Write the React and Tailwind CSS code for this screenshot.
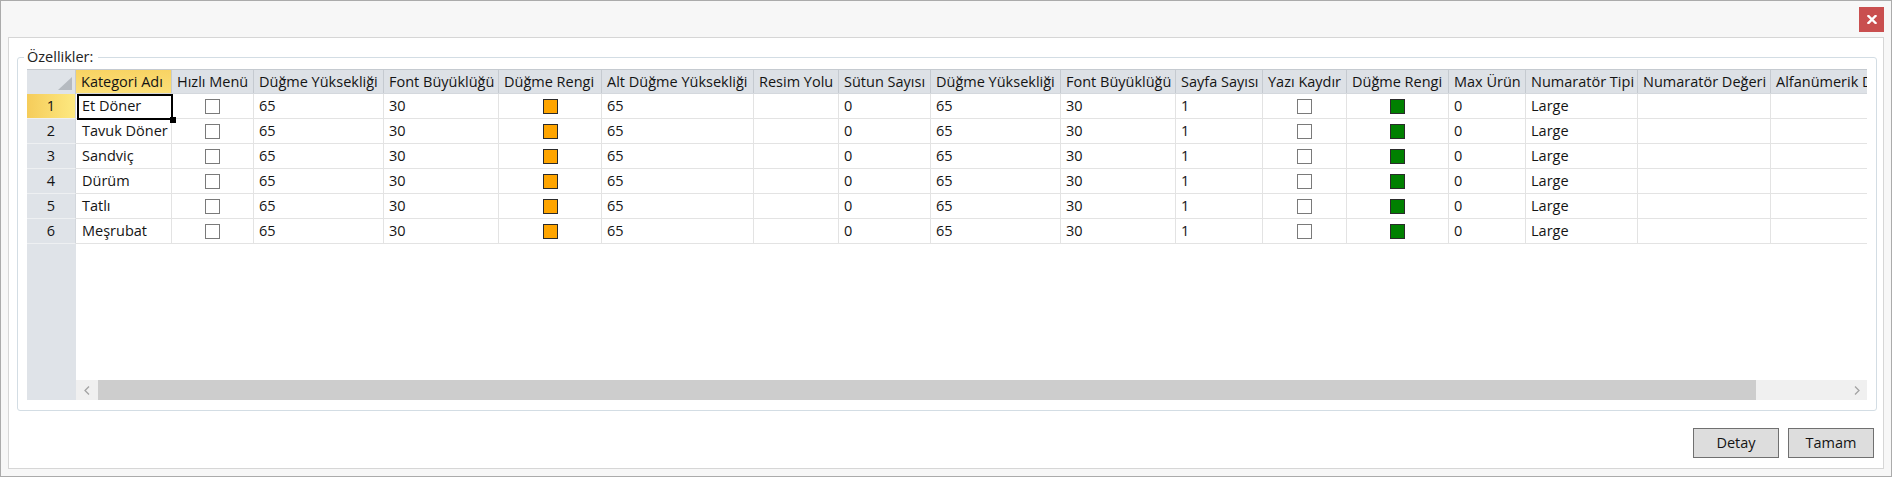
import React from "react";

const cols = [
  { t: "Kategori Adı", w: "w-[96px]", kind: "name", sel: true },
  { t: "Hızlı Menü", w: "w-[82px]", kind: "check" },
  { t: "Düğme Yüksekliği", w: "w-[130px]", v: "65" },
  { t: "Font Büyüklüğü", w: "w-[115px]", v: "30" },
  { t: "Düğme Rengi", w: "w-[103px]", kind: "color", c: "bg-[#ffa500]" },
  { t: "Alt Düğme Yüksekliği", w: "w-[152px]", v: "65" },
  { t: "Resim Yolu", w: "w-[85px]", v: "" },
  { t: "Sütun Sayısı", w: "w-[92px]", v: "0" },
  { t: "Düğme Yüksekliği", w: "w-[130px]", v: "65" },
  { t: "Font Büyüklüğü", w: "w-[115px]", v: "30" },
  { t: "Sayfa Sayısı", w: "w-[87px]", v: "1" },
  { t: "Yazı Kaydır", w: "w-[84px]", kind: "check" },
  { t: "Düğme Rengi", w: "w-[102px]", kind: "color", c: "bg-[#008000]" },
  { t: "Max Ürün", w: "w-[77px]", v: "0" },
  { t: "Numaratör Tipi", w: "w-[112px]", v: "Large" },
  { t: "Numaratör Değeri", w: "w-[133px]", v: "" },
  { t: "Alfanümerik Düğme Yüksekliği", w: "w-[200px]", v: "" },
];

const rows = ["Et Döner", "Tavuk Döner", "Sandviç", "Dürüm", "Tatlı", "Meşrubat"];

function Cell({ col, name, first }) {
  let inner = null;
  if (col.kind === "name") {
    inner = <span className="pl-[6px] whitespace-nowrap">{name}</span>;
  } else if (col.kind === "check") {
    inner = (
      <div className="flex-1 flex justify-center">
        <div className="w-[15px] h-[15px] border border-[#7a7a7a] bg-white" />
      </div>
    );
  } else if (col.kind === "color") {
    inner = (
      <div className="flex-1 flex justify-center">
        <div className={`w-[15px] h-[15px] border-[1.5px] border-[#2b2b2b] ${col.c}`} />
      </div>
    );
  } else {
    inner = <span className="pl-[5px] whitespace-nowrap">{col.v}</span>;
  }
  return (
    <div className={`${col.w} shrink-0 h-full flex items-center border-r border-[#e3e3e3] relative`}>
      {inner}
      {first && col.kind === "name" && (
        <div className="absolute top-[0px] left-[1px] right-[-2px] bottom-[-2px] border-2 border-black z-10">
          <div className="absolute right-[-5px] bottom-[-5px] w-[6px] h-[6px] bg-black" />
        </div>
      )}
    </div>
  );
}

export default function App() {
  return (
    <div className="w-[1892px] h-[477px] bg-[#f7f7f7] border border-[#ababab] flex flex-col font-['Open_Sans',sans-serif] text-[14.5px] leading-[16px] text-[#141414]">
      {/* title bar */}
      <div className="h-[36px] shrink-0 flex justify-end items-start pt-[6px] pr-[7px]">
        <div className="w-[25px] h-[25px] bg-[#c94f4f] flex items-center justify-center">
          <svg width="10" height="9" viewBox="0 0 10 9">
            <path d="M1.5 1 L8.5 8 M8.5 1 L1.5 8" stroke="white" strokeWidth="2.4" strokeLinecap="square" />
          </svg>
        </div>
      </div>

      {/* inner panel */}
      <div className="mx-[7px] h-[432px] shrink-0 bg-white border border-[#d6d6d6] flex flex-col">
        <fieldset className="mt-[11px] ml-[8px] mr-[6px] h-[362px] border border-[#d3dde4] rounded-[3px] pl-[9px] pr-[9px] pt-[4px] pb-[10px] flex">
          <legend className="ml-[-3px] pl-[3px] pr-[5px] text-[#222]">Özellikler:</legend>
          <div className="flex w-[1840px] h-[331px]">
            {/* row headers */}
            <div className="w-[49px] shrink-0 bg-[#dfe3e8] flex flex-col">
              <div className="h-[25px] border-t border-[#c5cad0] border-r border-r-[#c5cad0] relative">
                <svg className="absolute right-[3px] bottom-[4px]" width="14" height="13" viewBox="0 0 14 13">
                  <polygon points="14,0 14,13 0,13" fill="#b5bac0" />
                </svg>
              </div>
              {rows.map((r, i) => (
                <div
                  key={i}
                  className={`h-[25px] flex items-center justify-center border-b border-[#eef0f2] border-r border-r-[#d3d7dc] ${
                    i === 0 ? "bg-linear-to-r from-[#f5cc5a] to-[#fde980]" : ""
                  }`}
                >
                  {i + 1}
                </div>
              ))}
              <div className="flex-1" />
            </div>

            {/* data area */}
            <div className="flex-1 min-w-0 flex flex-col overflow-hidden bg-white">
              <div className="h-[25px] shrink-0 flex bg-[#dde1e6] border-t border-[#c5cad0] border-b border-b-[#d4d8dd]">
                {cols.map((c, i) => (
                  <div
                    key={i}
                    className={`${c.w} shrink-0 h-full flex items-center pl-[5px] border-r border-[#c5cad0] whitespace-nowrap overflow-hidden ${
                      c.sel ? "bg-linear-to-b from-[#f8d363] to-[#fbdf78]" : ""
                    }`}
                  >
                    {c.t}
                  </div>
                ))}
              </div>
              {rows.map((r, ri) => (
                <div key={ri} className="h-[25px] shrink-0 flex border-b border-[#e3e3e3]">
                  {cols.map((c, ci) => (
                    <Cell key={ci} col={c} name={r} first={ri === 0} />
                  ))}
                </div>
              ))}
              <div className="flex-1" />
              {/* horizontal scrollbar */}
              <div className="h-[20px] shrink-0 flex bg-[#f0f0f0]">
                <div className="w-[22px] shrink-0 flex items-center justify-center">
                  <svg width="6" height="9" viewBox="0 0 6 9">
                    <polyline points="5,0.5 1,4.5 5,8.5" fill="none" stroke="#a3a3a3" strokeWidth="1.3" />
                  </svg>
                </div>
                <div className="w-[1658px] shrink-0 bg-[#cdcdcd]" />
                <div className="flex-1" />
                <div className="w-[20px] shrink-0 flex items-center justify-center">
                  <svg width="6" height="9" viewBox="0 0 6 9">
                    <polyline points="1,0.5 5,4.5 1,8.5" fill="none" stroke="#a3a3a3" strokeWidth="1.3" />
                  </svg>
                </div>
              </div>
            </div>
          </div>
        </fieldset>

        <div className="mt-[17px] flex justify-end gap-[9px] pr-[9px]">
          <button className="w-[86px] h-[30px] bg-[#dddddd] border border-[#707070] text-[#141414]">Detay</button>
          <button className="w-[86px] h-[30px] bg-[#dddddd] border border-[#707070] text-[#141414]">Tamam</button>
        </div>
      </div>
    </div>
  );
}
